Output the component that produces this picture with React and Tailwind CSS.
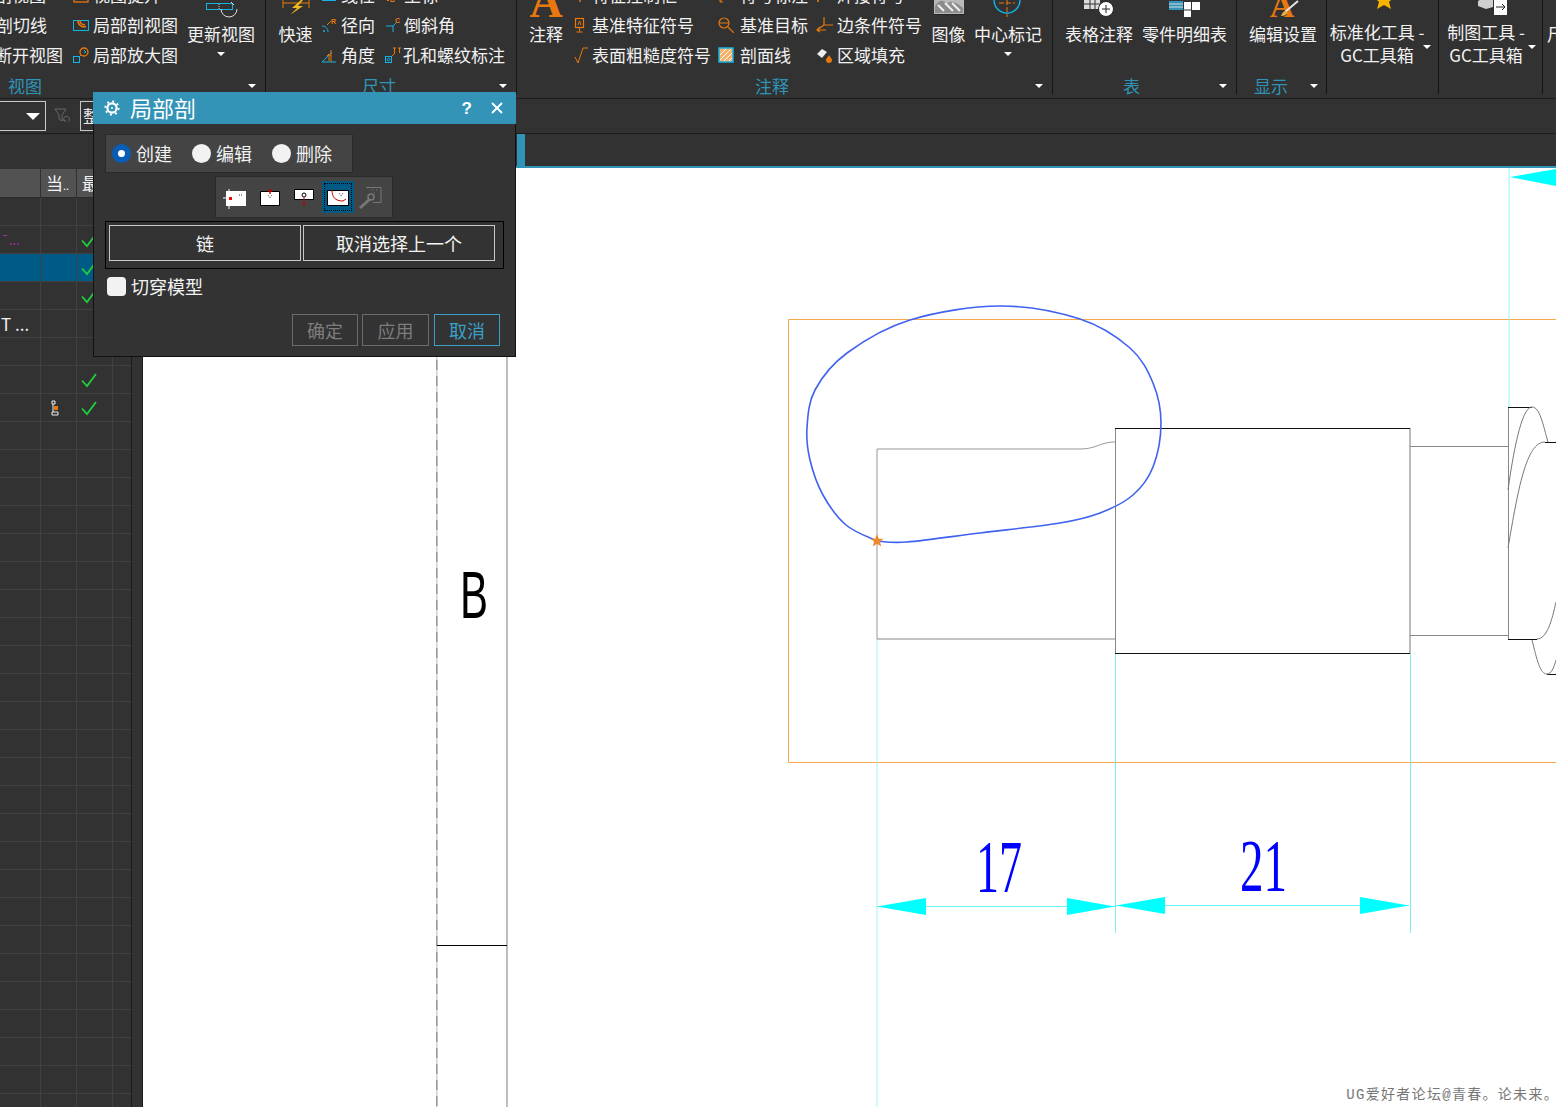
import React from 'react';

const CJK = '"Noto Sans CJK SC", "Noto Sans", sans-serif';
const CY = '#14b4e6';
const OR = '#e8780e';

// ribbon caret
const Caret = ({ className = '' }) => (
  <span className={`block w-0 h-0 border-x-[4px] border-x-transparent border-t-[4px] border-t-white ${className}`} />
);

const Ico = ({ w = 16, h = 16, children }) => (
  <svg width={w} height={h} viewBox={`0 0 ${w} ${h}`} fill="none" className="shrink-0">
    {children}
  </svg>
);

// small ribbon icons
const icons = {
  lift: <Ico><rect x="1" y="5" width="14" height="10" stroke={OR} strokeWidth="1.3" /></Ico>,
  section: (
    <Ico>
      <rect x="0.5" y="3.5" width="15" height="10" stroke={CY} />
      <path d="M5 3.5a6 6 0 0 0 8 6M7 3.5a4 4 0 0 0 5 4" stroke={OR} strokeWidth="1.5" />
    </Ico>
  ),
  detail: (
    <Ico>
      <rect x="0.5" y="9.5" width="6" height="6" stroke={CY} />
      <circle cx="11" cy="5" r="4" stroke={OR} strokeWidth="1.3" />
      <path d="M11 3l2 2-2 1" stroke={CY} />
      <path d="M7 9l1-1" stroke={OR} />
    </Ico>
  ),
  linear: <Ico><path d="M1 13h14" stroke={CY} strokeWidth="2" /></Ico>,
  radial: (
    <Ico>
      <path d="M1 9c3 0 6 2 6 6" stroke={CY} />
      <path d="M2 14h2M3 13v2" stroke={CY} />
      <path d="M6 8l4-4" stroke={OR} />
      <text x="10" y="7" fontSize="7" fill={OR} fontFamily="Liberation Sans" fontWeight="700">R</text>
    </Ico>
  ),
  angle: (
    <Ico>
      <path d="M1 15L11 5M1 15h14" stroke={CY} />
      <path d="M8 7v7M6 9l2-2 2 2M10 3v12" stroke={OR} />
    </Ico>
  ),
  coord: <Ico><path d="M2 12l2 2M4 12l-2 2" stroke={OR} /><rect x="6" y="11.5" width="3" height="3" stroke={OR} /></Ico>,
  chamfer: (
    <Ico>
      <path d="M1 9h7v6M8 9l4-4" stroke={CY} />
      <text x="10" y="6" fontSize="7" fill={OR} fontFamily="Liberation Sans" fontWeight="700">C</text>
    </Ico>
  ),
  hole: (
    <Ico>
      <rect x="0.5" y="9.5" width="6" height="6" stroke={CY} />
      <circle cx="3.5" cy="12.5" r="1.3" stroke={CY} />
      <path d="M7 9l3-3M8 1h3M9.5 1v5M13 1h3M14.5 1v5" stroke={OR} />
    </Ico>
  ),
  feature: <Ico w={12}><path d="M6 10v5" stroke={OR} strokeWidth="1.4" /></Ico>,
  datum: (
    <Ico w={12}>
      <rect x="1.5" y="1.5" width="8" height="9" stroke={OR} strokeWidth="1.2" />
      <path d="M5.5 10.5v4M2.5 15h6M4 8l1.5-4L7 8" stroke={OR} />
    </Ico>
  ),
  rough: <Ico w={14}><path d="M1 10l3 6 5-15h5" stroke={OR} /></Ico>,
  note: <Ico><path d="M2 15l3-4M2 15v-3M2 15h3" stroke={OR} /></Ico>,
  target: <Ico><circle cx="6" cy="6" r="5" stroke={OR} strokeWidth="1.2" /><path d="M1 6h10M10 10l6 6" stroke={OR} strokeWidth="1.2" /></Ico>,
  hatch: (
    <Ico>
      <rect x="1" y="1" width="14" height="14" fill="#f6b26b" stroke={CY} strokeWidth="1.5" />
      <path d="M2 8l6-6M2 13L13 2M6 14l8-8M11 14l3-3" stroke="#fff" />
    </Ico>
  ),
  weld: <Ico><path d="M2 15v-4" stroke={OR} strokeWidth="1.6" /></Ico>,
  edge: <Ico w={18}><path d="M8 0v8h9M8 8l-7 5h9M1 13l3-3M1 13l3 2" stroke={OR} strokeWidth="1.2" /></Ico>,
  fill: (
    <Ico>
      <path d="M1 7l5-5 5 3-5 6z" fill="#eee" />
      <path d="M13 8c-2 3-3 4-3 5a3 3 0 0 0 6 0c0-1-1-2-3-5z" fill={OR} />
    </Ico>
  ),
};

// big ribbon icons, only the part below the window edge is seen
const bigIcons = {
  update: (
    <svg width="34" height="24" viewBox="0 0 34 24" fill="none">
      <rect x="2.5" y="3.5" width="26" height="6" stroke={CY} />
      <path d="M15 4v5" stroke="#ccc" strokeDasharray="1 1" />
      <path d="M17 9a8 8 0 0 0 16 0M27 2l3 3" stroke="#ddd" />
    </svg>
  ),
  quick: (
    <svg width="32" height="24" viewBox="0 0 32 24" fill="none">
      <path d="M3 0v8M29 0v8M3 3h26" stroke={OR} />
      <path d="M21 0l-9 8h5l-7 7 13-9h-5l5-6z" fill="#f4b81c" />
    </svg>
  ),
  note: (
    <svg width="34" height="24" viewBox="0 0 34 24">
      <text x="17" y="17" textAnchor="middle" fontSize="46" fontWeight="700" fill={OR} fontFamily="Liberation Serif">A</text>
    </svg>
  ),
  image: (
    <svg width="32" height="24" viewBox="0 0 32 24" fill="none">
      <rect x="1" y="-4" width="30" height="18" fill="#b9b9b9" />
      <path d="M2 6c5-7 8-6 12-2 3-4 8-3 16 4v5H2z" fill="#8c8c8c" />
      <path d="M5 5l6 6M12 3l8 8M19 3l8 8" stroke="#eee" strokeWidth="2" />
      <path d="M1 14.5h30" stroke="#222" />
    </svg>
  ),
  center: (
    <svg width="34" height="24" viewBox="0 0 34 24" fill="none">
      <path d="M3 0a13 13 0 0 0 26 0" stroke={CY} strokeWidth="1.4" />
      <path d="M16 0v17M8 3h16" stroke={OR} strokeDasharray="5 2" />
    </svg>
  ),
  table: (
    <svg width="32" height="24" viewBox="0 0 32 24" fill="none">
      <path d="M1 -2h16v11H1z" fill="#ddd" />
      <path d="M1 4h16M7 -2v11M12 -2v11" stroke="#333" />
      <circle cx="23" cy="9" r="7.5" fill="#fff" stroke="#222" />
      <path d="M19 9h8M23 5v8" stroke="#222" />
    </svg>
  ),
  parts: (
    <svg width="34" height="24" viewBox="0 0 34 24" fill="none">
      <path d="M1 1h14v9H1z" fill="#2f94b8" />
      <path d="M1 4h14M1 7h14" stroke="#ddd" />
      <path d="M16 2h7v8h-7zM24 2h8v8h-8zM16 10h7v7h-7z" fill="#fff" />
      <path d="M16 10h7" stroke="#333" />
    </svg>
  ),
  edit: (
    <svg width="32" height="24" viewBox="0 0 32 24" fill="none">
      <text x="15" y="17" textAnchor="middle" fontSize="34" fontWeight="700" fill={OR} fontFamily="Liberation Serif">A</text>
      <path d="M31 1L18 12" stroke="#e5e5e5" strokeWidth="2" />
      <path d="M19 11c-3 0-4 3-5 5 3 0 6-1 6-4z" fill="#e0b040" />
    </svg>
  ),
  star: (
    <svg width="38" height="24" viewBox="0 0 38 24">
      <path d="M26 -6l3 7h7l-5 5 2 7-7-4-7 4 2-7-5-5h7z" fill="#f7b500" />
    </svg>
  ),
  tool: (
    <svg width="50" height="24" viewBox="0 0 50 24" fill="none">
      <path d="M17 5l9-5 6 3v8l-7 2-8-3z" fill="#cfcfcf" />
      <path d="M33 0h13v19H33z" fill="#fff" />
      <path d="M35 11h8M41 8l3 3-3 3" stroke="#222" />
    </svg>
  ),
};

const Row = ({ icon, iconW, children }) => (
  <div className="flex items-center h-[30px] shrink-0 whitespace-nowrap">
    {icon && <span className={`flex ${iconW}`}>{icons[icon]}</span>}
    <span>{children}</span>
  </div>
);

const Col = ({ className = '', children }) => (
  <div className={`flex flex-col justify-end h-[70px] shrink-0 ${className}`}>{children}</div>
);

const Big = ({ icon, lines, caret, className = '' }) => (
  <div className={`flex flex-col items-center h-[71px] shrink-0 whitespace-nowrap ${className}`}>
    <div className="flex items-end justify-center h-[24px] overflow-hidden">{bigIcons[icon]}</div>
    <span className="leading-[20px]">{lines}</span>
    {caret && <Caret className="mt-[8px]" />}
  </div>
);

const Wide = ({ icon, top, className = '' }) => (
  <div className={`flex flex-col items-center h-[71px] shrink-0 whitespace-nowrap ${className}`}>
    <div className="flex items-end justify-center h-[20px] overflow-hidden">{bigIcons[icon]}</div>
    <span className="leading-[23px]">{top}</span>
    <span className="leading-[23px]">GC工具箱</span>
  </div>
);

const Group = ({ className, label, labelClass, caretClass, children }) => (
  <div className={`flex flex-col shrink-0 h-[94px] border-r border-[#161616] ${className}`}>
    <div className="flex h-[76px] overflow-hidden">{children}</div>
    <div className="flex items-center h-[18px] pt-[2px]">
      {label && <span className={`text-[17px] leading-[20px] text-[#2f94b8] ${labelClass}`}>{label}</span>}
      {caretClass && <Caret className={`ml-auto ${caretClass}`} />}
    </div>
  </div>
);

const Ribbon = () => (
  <div className="flex h-[98px] text-[17px] text-[#f2f2f2] overflow-hidden">
    <Group className="w-[266px]" label="视图" labelClass="ml-[8px]" caretClass="mr-[9px]">
      <Col className="w-[73px] -ml-[5px] mr-[5px]">
        <Row>剖视图</Row>
        <Row><span className="ml-[1px]">剖切线</span></Row>
        <Row>断开视图</Row>
      </Col>
      <Col className="w-[114px]">
        <Row icon="lift" iconW="w-[20px]">视图提升</Row>
        <Row icon="section" iconW="w-[20px]">局部剖视图</Row>
        <Row icon="detail" iconW="w-[20px]">局部放大图</Row>
      </Col>
      <Big icon="update" lines="更新视图" caret className="w-[68px]" />
    </Group>

    <Group className="w-[251px]" label="尺寸" labelClass="ml-[96px]" caretClass="mr-[9px]">
      <Big icon="quick" lines="快速" className="w-[35px] ml-[12px]" />
      <Col className="w-[64px] ml-[8px]">
        <Row icon="linear" iconW="w-[20px]">线性</Row>
        <Row icon="radial" iconW="w-[20px]">径向</Row>
        <Row icon="angle" iconW="w-[20px]">角度</Row>
      </Col>
      <Col className="w-[120px]">
        <Row icon="coord" iconW="w-[19px]">坐标</Row>
        <Row icon="chamfer" iconW="w-[19px]">倒斜角</Row>
        <Row icon="hole" iconW="w-[19px]">孔和螺纹标注</Row>
      </Col>
    </Group>

    <Group className="w-[536px]" label="注释" labelClass="ml-[238px]" caretClass="mr-[9px]">
      <Big icon="note" lines="注释" className="w-[34px] ml-[12px]" />
      <Col className="w-[144px] ml-[11px]">
        <Row icon="feature" iconW="w-[18px]">特征控制框</Row>
        <Row icon="datum" iconW="w-[18px]">基准特征符号</Row>
        <Row icon="rough" iconW="w-[18px]">表面粗糙度符号</Row>
      </Col>
      <Col className="w-[98px]">
        <Row icon="note" iconW="w-[22px]">符号标注</Row>
        <Row icon="target" iconW="w-[22px]">基准目标</Row>
        <Row icon="hatch" iconW="w-[22px]">剖面线</Row>
      </Col>
      <Col className="w-[115px]">
        <Row icon="weld" iconW="w-[21px]">焊接符号</Row>
        <Row icon="edge" iconW="w-[21px]">边条件符号</Row>
        <Row icon="fill" iconW="w-[21px]">区域填充</Row>
      </Col>
      <Big icon="image" lines="图像" className="w-[35px]" />
      <Big icon="center" lines="中心标记" caret className="w-[68px] ml-[8px]" />
    </Group>

    <Group className="w-[184px]" label="表" labelClass="ml-[70px]" caretClass="mr-[9px]">
      <Big icon="table" lines="表格注释" className="w-[68px] ml-[12px]" />
      <Big icon="parts" lines="零件明细表" className="w-[85px] ml-[9px]" />
    </Group>

    <Group className="w-[90px]" label="显示" labelClass="ml-[17px]" caretClass="mr-[8px]">
      <Big icon="edit" lines="编辑设置" className="w-[68px] ml-[12px]" />
    </Group>

    <Group className="w-[112px]">
      <Wide icon="star" top="标准化工具 -" className="w-[94px] ml-[3px]" />
      <Caret className="mt-[45px] -ml-[1px]" />
    </Group>

    <Group className="w-[104px]">
      <Wide icon="tool" top="制图工具 -" className="w-[82px] ml-[6px]" />
      <Caret className="mt-[45px] ml-[1px]" />
    </Group>

    <div className="flex flex-col h-[71px] pl-[4px] whitespace-nowrap">
      <span className="mt-[24px] leading-[20px]">尺寸</span>
    </div>
  </div>
);

const Toolbar = () => (
  <div className="flex items-center h-[36px] shrink-0 border-y border-[#1c1c1c] bg-[#323232]">
    <div className="flex items-center justify-end w-[46px] h-[30px] border border-l-0 border-[#c8c8c8] pr-[5px]">
      <span className="block w-0 h-0 border-x-[7px] border-x-transparent border-t-[7px] border-t-white" />
    </div>
    <svg width="18" height="18" viewBox="0 0 18 18" fill="none" className="ml-[8px]">
      <path d="M1 2h11L8 8v6L5 12V8z" stroke="#666" />
      <path d="M10 14a3 3 0 1 1 4 1M10 12v2h2" stroke="#666" />
    </svg>
    <div className="ml-[8px] w-[60px] h-[30px] border border-[#c8c8c8] text-[17px] text-[#e8e8e8] leading-[28px] pl-[2px] overflow-hidden">
      整
    </div>
  </div>
);

const Check = () => (
  <svg width="16" height="16" viewBox="0 0 16 16" fill="none">
    <path d="M1 8.5l5 5.5L15 2" stroke="#1fd03c" strokeWidth="1.8" />
  </svg>
);

const TreeIco = () => (
  <svg width="8" height="16" viewBox="0 0 8 16" fill="none">
    <path d="M1 1h3v3H1zM1 12h6v3H1zM2 4v8" stroke="#eee" />
    <rect x="3" y="6" width="4" height="4" fill={OR} />
  </svg>
);

const rows = [
  {},
  { name: <span className="text-[#b030b0] text-[13px]">¯...</span>, check: true },
  { selected: true, check: true },
  { check: true },
  { name: <span className="text-[#f2f2f2] text-[17px]">T ...</span> },
  {},
  { check: true },
  { cur: true, check: true },
  ...Array.from({ length: 25 }, () => ({})),
];

const cols = 'grid grid-cols-[41px_36px_36px_18px]';

const Tree = () => (
  <div className="flex shrink-0 w-[143px]">
    <div className="w-[131px] bg-[#323232] overflow-hidden">
      <div className="h-[35px]" />
      <div className={`${cols} h-[29px] bg-[#525252] border-b border-[#2a2a2a] text-[17px] text-[#f2f2f2] leading-[28px]`}>
        <div className="border-r border-[#303030]" />
        <div className="border-r border-[#303030] pl-[5px] whitespace-nowrap">当<span className="text-[11px]">..</span></div>
        <div className="border-r border-[#303030] pl-[5px]">最</div>
        <div />
      </div>
      {rows.map((r, i) => (
        <div key={i} className={`${cols} h-[28px] border-b border-[#414141] ${r.selected ? 'bg-[#005a86]' : ''}`}>
          <div className="flex items-center border-r border-[#414141] pl-[1px] whitespace-nowrap overflow-hidden">{r.name}</div>
          <div className="flex items-center justify-center border-r border-[#414141] pr-[7px]">{r.cur && <TreeIco />}</div>
          <div className="flex items-center pl-[4px] border-r border-[#414141]">{r.check && <Check />}</div>
          <div />
        </div>
      ))}
    </div>
    <div className="w-[12px] bg-[#323232] border-x border-[#1c1c1c]" />
  </div>
);

const catmull = (p) => {
  const n = p.length;
  let d = `M${p[0][0]} ${p[0][1]}`;
  for (let i = 0; i < n - 1; i++) {
    const a = p[Math.max(i - 1, 0)], b = p[i], c = p[i + 1], e = p[Math.min(i + 2, n - 1)];
    d += `C${b[0] + (c[0] - a[0]) / 6} ${b[1] + (c[1] - a[1]) / 6} ${c[0] - (e[0] - b[0]) / 6} ${c[1] - (e[1] - b[1]) / 6} ${c[0]} ${c[1]}`;
  }
  return d;
};

const spline = [
  [877, 541], [846, 525], [823, 495], [810, 460], [807, 428], [815, 390], [847, 353], [910, 320], [1000, 306], [1080, 319],
  [1130, 348], [1153, 383], [1161, 423], [1153, 467], [1133, 495], [1100, 513], [1060, 523], [980, 533], [907, 542], [877, 541],
];

const Drawing = () => (
  <svg viewBox="143 168 1413 939" width="1413" height="939" fill="none" className="block">
    {/* frame of the earlier view */}
    <path d="M436.8 168V1107" stroke="#d0d0d0" strokeWidth="1.5" />
    <path d="M436.8 168V1107" stroke="#999" strokeWidth="1.5" strokeDasharray="10 6" />
    <path d="M507 168V1107" stroke="#bdbdbd" strokeWidth="2" />
    <path d="M437 945.5H507" stroke="#000" />
    <text x="460" y="618" fontSize="66" textLength="28" lengthAdjust="spacingAndGlyphs" fill="#000" fontFamily="Liberation Sans">B</text>

    <path d="M1556 319.5H788.5V762.5H1556" stroke="#f5a84c" />

    {/* extension lines */}
    <path d="M877 639V1107" stroke="#a5f5f5" />
    <path d="M1115.5 653V933M1410.5 653V933" stroke="#7af0f0" />
    <path d="M1509 168V407" stroke="#8ef4f4" />
    <path d="M1510 177L1556 169V186Z" fill="#00ffff" />

    {/* shaft */}
    <path d="M877 639V449H1080C1095 449 1100 443 1112 442H1115" stroke="#999" />
    <path d="M877 639H1115" stroke="#888" />
    <path d="M1115.5 428V654" stroke="#888" />
    <path d="M1410 428V654" stroke="#bbb" strokeWidth="2" />
    <path d="M1115 428.5H1410M1115 653.5H1410" stroke="#111" />
    <path d="M1410 446.5H1508M1410 635.5H1508" stroke="#888" />
    <path d="M1508.5 407V639" stroke="#888" />
    <path d="M1508 407.5H1532M1545 442.5H1556M1508 639.5H1537M1547 674.5H1556" stroke="#111" />
    <path d="M1508 490C1515 440 1523 407 1532 407C1540 407 1543 425 1548 442" stroke="#777" />
    <path d="M1508 548C1518 490 1526 442 1545 442" stroke="#777" />
    <path d="M1537 639C1547 639 1552 620 1556 602M1532 640C1537 660 1540 674 1547 674C1551 674 1554 668 1556 660" stroke="#777" />

    {/* dimensions */}
    <path d="M877 906.5H1115" stroke="#66f4f4" />
    <path d="M1115 905.5H1409" stroke="#66f4f4" />
    <path d="M877 906.5L926 898V915ZM1115 906.5L1067 898V915ZM1116 905.5L1165 897V914ZM1409 905.5L1360 897V914Z" fill="#00ffff" />
    <text x="976" y="892" fontSize="75" textLength="46" lengthAdjust="spacingAndGlyphs" fill="#0000ff" fontFamily="Liberation Serif">17</text>
    <text x="1240" y="891" fontSize="75" textLength="47" lengthAdjust="spacingAndGlyphs" fill="#0000ff" fontFamily="Liberation Serif">21</text>

    {/* sketched boundary */}
    <path d={catmull(spline)} stroke="#3f62f0" strokeWidth="1.6" />
    <path d="M877 534.5l1.9 4.3h4.6l-3.6 3 1.4 4.7-4.3-2.8-4.3 2.8 1.4-4.7-3.6-3h4.6z" fill="#e88a2e" />
  </svg>
);

const Radio = ({ on, label }) => (
  <label className="flex items-center">
    {on ? (
      <span className="flex items-center justify-center w-[19px] h-[19px] rounded-full bg-[#0a5db5]">
        <span className="w-[7px] h-[7px] rounded-full bg-white" />
      </span>
    ) : (
      <span className="w-[19px] h-[19px] rounded-full bg-[#f2f2f2]" />
    )}
    <span className="ml-[5px]">{label}</span>
  </label>
);

const ModeIco = ({ children, active }) => (
  <div className={`flex items-center justify-center w-[32px] h-[32px] ${active ? 'bg-[#005a86] outline-1 -outline-offset-3 outline-dotted outline-black' : ''}`}>
    <svg width="26" height="26" viewBox="0 0 26 26" fill="none">
      <g transform="translate(0 1)">{children}</g>
    </svg>
  </div>
);

const Dialog = () => (
  <div className="absolute left-[93px] top-[92px] w-[423px] h-[265px] flex flex-col bg-[#333333] border border-t-0 border-[#111] text-[18px] text-[#f2f2f2]">
    <div className="flex items-center h-[32px] shrink-0 -mx-px bg-[#3394b8] text-white">
      <svg width="16" height="16" viewBox="0 0 16 16" fill="none" className="ml-[11px]">
        <circle cx="8" cy="8" r="4.6" stroke="#fff" strokeWidth="2.2" />
        <circle cx="8" cy="8" r="6.6" stroke="#fff" strokeWidth="2" strokeDasharray="2 3.18" />
        <circle cx="8" cy="8" r="1" fill="#fff" />
      </svg>
      <span className="ml-[10px] pb-[2px] text-[22px] leading-[30px]">局部剖</span>
      <span className="ml-auto pt-[1px] text-[17px] font-bold" style={{ fontFamily: 'Liberation Sans' }}>?</span>
      <svg width="12" height="12" viewBox="0 0 12 12" fill="none" className="ml-[19px] mr-[13px]">
        <path d="M1 1l10 10M11 1L1 11" stroke="#fff" strokeWidth="1.8" />
      </svg>
    </div>

    <div className="flex items-center gap-[20px] w-[248px] h-[39px] shrink-0 ml-[11px] mt-[10px] pl-[6px] bg-[#444] border border-[#2a2a2a]">
      <Radio on label="创建" />
      <Radio label="编辑" />
      <Radio label="删除" />
    </div>

    <div className="flex items-center gap-[2px] w-[178px] h-[42px] shrink-0 ml-[121px] mt-[3px] pl-[4px] bg-[#444] border border-[#2a2a2a]">
      <ModeIco>
        <path d="M3 6h20v15H3z" fill="#fff" />
        <path d="M0 13h6M6 4v20" stroke="#fff" />
        <rect x="6" y="12" width="3" height="3" fill="#f00" />
        <path d="M16 10h1M18 10h1" stroke="#333" />
      </ModeIco>
      <ModeIco>
        <path d="M3.5 6.5h19v14h-19z" fill="#fff" stroke="#000" />
        <path d="M13 4v5M11 6h4" stroke="#b00" strokeWidth="1.4" />
        <path d="M11 10l2 3 2-3" stroke="#555" strokeDasharray="1 1" />
      </ModeIco>
      <ModeIco>
        <path d="M3.5 4.5h19v10h-19z" fill="#fff" stroke="#000" />
        <circle cx="13" cy="10" r="2" stroke="#000" />
        <path d="M13 12v9" stroke="#b00" />
        <path d="M11.5 18h3l-1.5 3z" fill="#b00" />
      </ModeIco>
      <ModeIco active>
        <path d="M2.5 5.5h21v15h-21z" fill="#fff" stroke="#000" />
        <path d="M7 5c0 7 3 11 11 11l3-2" stroke="#c00" />
        <path d="M14 8l2 3 2-3" stroke="#555" strokeDasharray="1 1" />
      </ModeIco>
      <ModeIco>
        <path d="M7 2.5h15v15h-8" stroke="#777" />
        <path d="M1 23l10-9" stroke="#777" strokeWidth="3" />
        <circle cx="12" cy="12" r="3" stroke="#777" strokeWidth="1.6" />
        <path d="M13 5h1M17 5h1M15 8h1" stroke="#777" />
      </ModeIco>
    </div>

    <div className="flex gap-[2px] w-[399px] h-[48px] shrink-0 ml-[11px] mt-[3px] pl-[3px] pt-[3px] border border-black">
      <button className="w-[192px] h-[36px] border border-[#c8c8c8]">链</button>
      <button className="w-[192px] h-[36px] border border-[#c8c8c8]">取消选择上一个</button>
    </div>

    <label className="flex items-center ml-[13px] mt-[7px] h-[20px]">
      <span className="w-[19px] h-[19px] rounded-[4px] bg-[#f2f2f2]" />
      <span className="ml-[5px]">切穿模型</span>
    </label>

    <div className="flex justify-end gap-[4px] mr-[15px] mt-auto mb-[10px]">
      <button className="w-[66px] h-[32px] border border-[#6b6b6b] text-[#7d7d7d]">确定</button>
      <button className="w-[67px] h-[32px] border border-[#6b6b6b] text-[#7d7d7d] mr-[1px]">应用</button>
      <button className="w-[66px] h-[32px] border border-[#3a9fc4] text-[#3a9fc4]">取消</button>
    </div>
  </div>
);

export default function App() {
  return (
    <div className="relative flex flex-col w-[1556px] h-[1107px] overflow-hidden bg-[#323232]" style={{ fontFamily: CJK }}>
      <Ribbon />
      <Toolbar />
      <div className="flex flex-1 min-h-0">
        <Tree />
        <div className="flex flex-col flex-1 min-w-0">
          <div className="h-[34px] shrink-0 border-b-2 border-[#2f94b8]">
            <div className="ml-[374px] w-[8px] h-full bg-[#2f94b8]" />
          </div>
          <div className="relative flex-1 bg-white overflow-hidden">
            <Drawing />
            <span className="absolute -right-[3px] bottom-[2px] text-[14px] leading-[20px] tracking-[1.3px] text-[#777] whitespace-nowrap" style={{ fontFamily: '"Liberation Mono", "Noto Sans CJK SC", monospace' }}>
              UG爱好者论坛@青春。论未来。
            </span>
          </div>
        </div>
      </div>
      <Dialog />
    </div>
  );
}
